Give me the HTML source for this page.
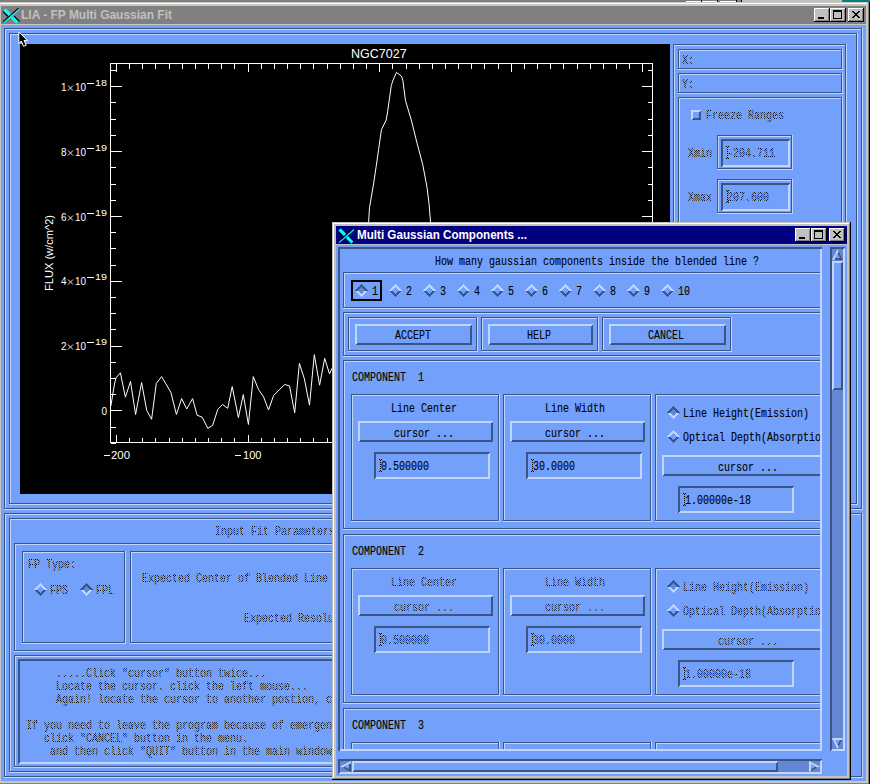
<!DOCTYPE html>
<html><head><meta charset="utf-8"><style>
html,body{margin:0;padding:0;background:#73a0fa;width:870px;height:784px;overflow:hidden}
svg{display:block}
</style></head><body>
<svg width="870" height="784" viewBox="0 0 870 784">
<defs><pattern id="st" width="2" height="2" patternUnits="userSpaceOnUse"><rect x="0" y="0" width="1" height="1" fill="#000"/><rect x="1" y="1" width="1" height="1" fill="#000"/></pattern></defs>
<g shape-rendering="crispEdges"><rect x="0" y="0" width="870" height="784" fill="#73a0fa"/><rect x="0" y="0" width="686" height="2" fill="#808080"/><rect x="686" y="0" width="56" height="2" fill="#808080"/><rect x="686" y="1" width="15" height="1" fill="#fff"/><rect x="701" y="0" width="1" height="2" fill="#000"/><rect x="702" y="1" width="15" height="1" fill="#fff"/><rect x="717" y="0" width="1" height="2" fill="#000"/><rect x="720" y="1" width="16" height="1" fill="#fff"/><rect x="736" y="0" width="1" height="2" fill="#000"/><rect x="741" y="0" width="1" height="2" fill="#000"/><rect x="742" y="0" width="100" height="2" fill="#c0c0c0"/><rect x="842" y="0" width="28" height="2" fill="#008080"/><rect x="0" y="2" width="870" height="782" fill="#c8c6c0"/><rect x="0" y="3" width="867" height="1" fill="#fff"/><rect x="868" y="2" width="1" height="782" fill="#808080"/><rect x="869" y="2" width="1" height="782" fill="#000"/><rect x="0" y="783" width="868" height="1" fill="#808080"/><rect x="1" y="6" width="865" height="18" fill="#808080"/><rect x="1" y="25" width="865" height="756" fill="#73a0fa"/></g><g transform="translate(3,8)" fill="none"><path d="M1.5 1.5L7.5 7.5" stroke="#00ffff" stroke-width="3.2"/><path d="M0 3.5L5 8.5" stroke="#000" stroke-width="1.1"/><path d="M9 9L14.5 14.5" stroke="#00ffff" stroke-width="3.2"/><path d="M11 8L16.5 13.5" stroke="#000" stroke-width="1.1"/><path d="M16 1.5L1 14.5" stroke="#00ffff" stroke-width="1.3"/><path d="M15.5 0.2L0 13.8" stroke="#000" stroke-width="1.1"/></g><text x="21" y="19" font-family="Liberation Sans" font-size="12.5" font-weight="bold" fill="#c0c0c0" textLength="151" lengthAdjust="spacingAndGlyphs">LIA - FP Multi Gaussian Fit</text><g shape-rendering="crispEdges"><rect x="848" y="8" width="16" height="14" fill="#c0c0c0"/><rect x="848" y="8" width="15" height="1" fill="#fff"/><rect x="848" y="8" width="1" height="13" fill="#fff"/><rect x="863" y="8" width="1" height="14" fill="#000"/><rect x="848" y="21" width="16" height="1" fill="#000"/><rect x="862" y="9" width="1" height="12" fill="#808080"/><rect x="849" y="20" width="14" height="1" fill="#808080"/><rect x="852" y="11" width="2" height="1" fill="#000"/><rect x="858" y="11" width="2" height="1" fill="#000"/><rect x="853" y="12" width="2" height="1" fill="#000"/><rect x="857" y="12" width="2" height="1" fill="#000"/><rect x="854" y="13" width="4" height="1" fill="#000"/><rect x="855" y="14" width="2" height="1" fill="#000"/><rect x="854" y="15" width="4" height="1" fill="#000"/><rect x="853" y="16" width="2" height="1" fill="#000"/><rect x="857" y="16" width="2" height="1" fill="#000"/><rect x="852" y="17" width="2" height="1" fill="#000"/><rect x="858" y="17" width="2" height="1" fill="#000"/><rect x="830" y="8" width="16" height="14" fill="#c0c0c0"/><rect x="830" y="8" width="15" height="1" fill="#fff"/><rect x="830" y="8" width="1" height="13" fill="#fff"/><rect x="845" y="8" width="1" height="14" fill="#000"/><rect x="830" y="21" width="16" height="1" fill="#000"/><rect x="844" y="9" width="1" height="12" fill="#808080"/><rect x="831" y="20" width="14" height="1" fill="#808080"/><rect x="833" y="10" width="9" height="2" fill="#000"/><rect x="833" y="10" width="1" height="9" fill="#000"/><rect x="841" y="10" width="1" height="9" fill="#000"/><rect x="833" y="18" width="9" height="1" fill="#000"/><rect x="814" y="8" width="16" height="14" fill="#c0c0c0"/><rect x="814" y="8" width="15" height="1" fill="#fff"/><rect x="814" y="8" width="1" height="13" fill="#fff"/><rect x="829" y="8" width="1" height="14" fill="#000"/><rect x="814" y="21" width="16" height="1" fill="#000"/><rect x="828" y="9" width="1" height="12" fill="#808080"/><rect x="815" y="20" width="14" height="1" fill="#808080"/><rect x="818" y="17" width="6" height="2" fill="#000"/><rect x="4" y="28" width="858" height="1" fill="#3d5585"/><rect x="4" y="28" width="1" height="481" fill="#3d5585"/><rect x="5" y="29" width="856" height="1" fill="#c2d6fd"/><rect x="5" y="29" width="1" height="479" fill="#c2d6fd"/><rect x="5" y="508" width="857" height="1" fill="#3d5585"/><rect x="861" y="29" width="1" height="480" fill="#3d5585"/><rect x="4" y="509" width="859" height="1" fill="#c2d6fd"/><rect x="862" y="28" width="1" height="482" fill="#c2d6fd"/><rect x="9" y="33" width="848" height="1" fill="#3d5585"/><rect x="9" y="33" width="1" height="471" fill="#3d5585"/><rect x="10" y="34" width="846" height="1" fill="#c2d6fd"/><rect x="10" y="34" width="1" height="469" fill="#c2d6fd"/><rect x="10" y="503" width="847" height="1" fill="#3d5585"/><rect x="856" y="34" width="1" height="470" fill="#3d5585"/><rect x="9" y="504" width="849" height="1" fill="#c2d6fd"/><rect x="857" y="33" width="1" height="472" fill="#c2d6fd"/><rect x="20" y="44" width="650" height="450" fill="#000"/></g><g stroke="#fff" fill="none" stroke-width="1" shape-rendering="crispEdges"><path d="M110.5 63.5H652.5V442.5H110.5Z"/><path d="M116.5 442.5V434.5M116.5 63.5V71.5M129.5 442.5V437.5M129.5 63.5V68.5M142.5 442.5V437.5M142.5 63.5V68.5M155.5 442.5V437.5M155.5 63.5V68.5M169.5 442.5V437.5M169.5 63.5V68.5M182.5 442.5V437.5M182.5 63.5V68.5M195.5 442.5V437.5M195.5 63.5V68.5M208.5 442.5V437.5M208.5 63.5V68.5M221.5 442.5V437.5M221.5 63.5V68.5M234.5 442.5V437.5M234.5 63.5V68.5M248.5 442.5V434.5M248.5 63.5V71.5M261.5 442.5V437.5M261.5 63.5V68.5M274.5 442.5V437.5M274.5 63.5V68.5M287.5 442.5V437.5M287.5 63.5V68.5M300.5 442.5V437.5M300.5 63.5V68.5M313.5 442.5V437.5M313.5 63.5V68.5M327.5 442.5V437.5M327.5 63.5V68.5M340.5 442.5V437.5M340.5 63.5V68.5M353.5 442.5V437.5M353.5 63.5V68.5M366.5 442.5V437.5M366.5 63.5V68.5M379.5 442.5V434.5M379.5 63.5V71.5M392.5 442.5V437.5M392.5 63.5V68.5M406.5 442.5V437.5M406.5 63.5V68.5M419.5 442.5V437.5M419.5 63.5V68.5M432.5 442.5V437.5M432.5 63.5V68.5M445.5 442.5V437.5M445.5 63.5V68.5M458.5 442.5V437.5M458.5 63.5V68.5M471.5 442.5V437.5M471.5 63.5V68.5M484.5 442.5V437.5M484.5 63.5V68.5M498.5 442.5V437.5M498.5 63.5V68.5M511.5 442.5V434.5M511.5 63.5V71.5M524.5 442.5V437.5M524.5 63.5V68.5M537.5 442.5V437.5M537.5 63.5V68.5M550.5 442.5V437.5M550.5 63.5V68.5M563.5 442.5V437.5M563.5 63.5V68.5M577.5 442.5V437.5M577.5 63.5V68.5M590.5 442.5V437.5M590.5 63.5V68.5M603.5 442.5V437.5M603.5 63.5V68.5M616.5 442.5V437.5M616.5 63.5V68.5M629.5 442.5V437.5M629.5 63.5V68.5M642.5 442.5V434.5M642.5 63.5V71.5M110.5 443.5H115.5M652.5 443.5H647.5M110.5 427.5H115.5M652.5 427.5H647.5M110.5 410.5H121.5M652.5 410.5H641.5M110.5 394.5H115.5M652.5 394.5H647.5M110.5 378.5H115.5M652.5 378.5H647.5M110.5 362.5H115.5M652.5 362.5H647.5M110.5 346.5H121.5M652.5 346.5H641.5M110.5 329.5H115.5M652.5 329.5H647.5M110.5 313.5H115.5M652.5 313.5H647.5M110.5 297.5H115.5M652.5 297.5H647.5M110.5 281.5H121.5M652.5 281.5H641.5M110.5 265.5H115.5M652.5 265.5H647.5M110.5 248.5H115.5M652.5 248.5H647.5M110.5 232.5H115.5M652.5 232.5H647.5M110.5 216.5H121.5M652.5 216.5H641.5M110.5 200.5H115.5M652.5 200.5H647.5M110.5 184.5H115.5M652.5 184.5H647.5M110.5 167.5H115.5M652.5 167.5H647.5M110.5 151.5H121.5M652.5 151.5H641.5M110.5 135.5H115.5M652.5 135.5H647.5M110.5 119.5H115.5M652.5 119.5H647.5M110.5 102.5H115.5M652.5 102.5H647.5M110.5 86.5H121.5M652.5 86.5H641.5M110.5 70.5H115.5M652.5 70.5H647.5"/></g><polyline fill="none" stroke="#fff" stroke-width="1" points="110.8,406.2 114.7,382.8 116.0,377.9 120.4,372.8 125.4,397.2 130.5,381.4 135.6,414.5 141.6,382.5 146.7,410.3 151.6,419.3 156.3,383.4 161.6,376.6 170.9,392.4 176.4,414.5 181.6,398.6 186.7,409.0 192.6,398.6 197.1,415.2 202.2,417.2 207.8,428.3 212.6,425.5 217.8,409.3 222.6,404.5 227.7,408.3 232.2,386.6 238.4,417.6 243.3,394.6 248.4,424.5 253.3,376.6 258.4,389.3 263.6,396.9 268.5,410.0 273.6,395.5 284.7,384.5 289.5,385.9 294.7,412.8 299.4,363.4 304.4,378.9 309.5,405.2 314.3,354.6 319.6,385.2 324.7,358.3 329.5,373.9 335.0,362.0 345.0,340.0 360.0,300.0 368.5,224.0 369.5,207.7 373.7,183.1 376.2,166.3 378.6,149.5 381.4,129.8 386.2,120.0 387.6,111.7 391.3,85.5 393.1,80.0 396.5,72.4 401.4,76.1 402.8,80.0 405.5,100.7 411.3,120.0 416.5,141.0 422.8,164.9 427.0,187.3 429.1,204.2 430.5,222.0 432.0,240.0"/><text x="351" y="58" font-family="Liberation Sans" font-size="12.5" fill="#fff"  xml:space="preserve">NGC7027</text><text x="61" y="91" font-family="Liberation Sans" font-size="10" fill="#fff">1</text><path d="M68 85.5L73 90.5M73 85.5L68 90.5" stroke="#fff" stroke-width="0.9" fill="none"/><text x="75" y="91" font-family="Liberation Sans" font-size="10" fill="#fff" textLength="11" lengthAdjust="spacingAndGlyphs">10</text><rect x="87" y="83" width="7" height="1" fill="#fff"/><text x="95" y="86" font-family="Liberation Sans" font-size="9.3" fill="#fff" textLength="12" lengthAdjust="spacingAndGlyphs">18</text><text x="61" y="156" font-family="Liberation Sans" font-size="10" fill="#fff">8</text><path d="M68 150.5L73 155.5M73 150.5L68 155.5" stroke="#fff" stroke-width="0.9" fill="none"/><text x="75" y="156" font-family="Liberation Sans" font-size="10" fill="#fff" textLength="11" lengthAdjust="spacingAndGlyphs">10</text><rect x="87" y="148" width="7" height="1" fill="#fff"/><text x="95" y="151" font-family="Liberation Sans" font-size="9.3" fill="#fff" textLength="12" lengthAdjust="spacingAndGlyphs">19</text><text x="61" y="221" font-family="Liberation Sans" font-size="10" fill="#fff">6</text><path d="M68 215.5L73 220.5M73 215.5L68 220.5" stroke="#fff" stroke-width="0.9" fill="none"/><text x="75" y="221" font-family="Liberation Sans" font-size="10" fill="#fff" textLength="11" lengthAdjust="spacingAndGlyphs">10</text><rect x="87" y="213" width="7" height="1" fill="#fff"/><text x="95" y="216" font-family="Liberation Sans" font-size="9.3" fill="#fff" textLength="12" lengthAdjust="spacingAndGlyphs">19</text><text x="61" y="285" font-family="Liberation Sans" font-size="10" fill="#fff">4</text><path d="M68 279.5L73 284.5M73 279.5L68 284.5" stroke="#fff" stroke-width="0.9" fill="none"/><text x="75" y="285" font-family="Liberation Sans" font-size="10" fill="#fff" textLength="11" lengthAdjust="spacingAndGlyphs">10</text><rect x="87" y="277" width="7" height="1" fill="#fff"/><text x="95" y="280" font-family="Liberation Sans" font-size="9.3" fill="#fff" textLength="12" lengthAdjust="spacingAndGlyphs">19</text><text x="61" y="350" font-family="Liberation Sans" font-size="10" fill="#fff">2</text><path d="M68 344.5L73 349.5M73 344.5L68 349.5" stroke="#fff" stroke-width="0.9" fill="none"/><text x="75" y="350" font-family="Liberation Sans" font-size="10" fill="#fff" textLength="11" lengthAdjust="spacingAndGlyphs">10</text><rect x="87" y="342" width="7" height="1" fill="#fff"/><text x="95" y="345" font-family="Liberation Sans" font-size="9.3" fill="#fff" textLength="12" lengthAdjust="spacingAndGlyphs">19</text><text x="101.5" y="414.5" font-family="Liberation Sans" font-size="10" fill="#fff">0</text><rect x="104" y="455" width="6" height="1" fill="#fff"/><text x="111" y="459" font-family="Liberation Sans" font-size="10.5" fill="#fff" textLength="19" lengthAdjust="spacingAndGlyphs">200</text><rect x="235" y="455" width="6" height="1" fill="#fff"/><text x="243" y="459" font-family="Liberation Sans" font-size="10.5" fill="#fff" textLength="18.5" lengthAdjust="spacingAndGlyphs">100</text><text transform="translate(53,291) rotate(-90)" font-family="Liberation Sans" font-size="10.5" fill="#fff" textLength="76" lengthAdjust="spacingAndGlyphs">FLUX (w/cm^2)</text><g shape-rendering="crispEdges"><rect x="673" y="44" width="173" height="1" fill="#3d5585"/><rect x="673" y="44" width="1" height="455" fill="#3d5585"/><rect x="674" y="45" width="171" height="1" fill="#c2d6fd"/><rect x="674" y="45" width="1" height="453" fill="#c2d6fd"/><rect x="674" y="498" width="172" height="1" fill="#3d5585"/><rect x="845" y="45" width="1" height="454" fill="#3d5585"/><rect x="673" y="499" width="174" height="1" fill="#c2d6fd"/><rect x="846" y="44" width="1" height="456" fill="#c2d6fd"/><rect x="678" y="49" width="164" height="1" fill="#3d5585"/><rect x="678" y="49" width="1" height="20" fill="#3d5585"/><rect x="679" y="50" width="162" height="1" fill="#c2d6fd"/><rect x="679" y="50" width="1" height="18" fill="#c2d6fd"/><rect x="679" y="68" width="163" height="1" fill="#3d5585"/><rect x="841" y="50" width="1" height="19" fill="#3d5585"/><rect x="678" y="69" width="165" height="1" fill="#c2d6fd"/><rect x="842" y="49" width="1" height="21" fill="#c2d6fd"/><rect x="678" y="73" width="164" height="1" fill="#3d5585"/><rect x="678" y="73" width="1" height="20" fill="#3d5585"/><rect x="679" y="74" width="162" height="1" fill="#c2d6fd"/><rect x="679" y="74" width="1" height="18" fill="#c2d6fd"/><rect x="679" y="92" width="163" height="1" fill="#3d5585"/><rect x="841" y="74" width="1" height="19" fill="#3d5585"/><rect x="678" y="93" width="165" height="1" fill="#c2d6fd"/><rect x="842" y="73" width="1" height="21" fill="#c2d6fd"/><rect x="678" y="97" width="164" height="1" fill="#3d5585"/><rect x="678" y="97" width="1" height="398" fill="#3d5585"/><rect x="679" y="98" width="162" height="1" fill="#c2d6fd"/><rect x="679" y="98" width="1" height="396" fill="#c2d6fd"/><rect x="679" y="494" width="163" height="1" fill="#3d5585"/><rect x="841" y="98" width="1" height="397" fill="#3d5585"/><rect x="678" y="495" width="165" height="1" fill="#c2d6fd"/><rect x="842" y="97" width="1" height="399" fill="#c2d6fd"/><rect x="691" y="110" width="10" height="1" fill="#c2d6fd"/><rect x="691" y="110" width="1" height="10" fill="#c2d6fd"/><rect x="691" y="111" width="9" height="1" fill="#c2d6fd"/><rect x="692" y="110" width="1" height="9" fill="#c2d6fd"/><rect x="692" y="119" width="9" height="1" fill="#3d5585"/><rect x="700" y="111" width="1" height="9" fill="#3d5585"/><rect x="693" y="118" width="8" height="1" fill="#3d5585"/><rect x="699" y="112" width="1" height="8" fill="#3d5585"/><rect x="717" y="135" width="75" height="1" fill="#3d5585"/><rect x="717" y="135" width="1" height="34" fill="#3d5585"/><rect x="718" y="136" width="73" height="1" fill="#c2d6fd"/><rect x="718" y="136" width="1" height="32" fill="#c2d6fd"/><rect x="718" y="168" width="74" height="1" fill="#3d5585"/><rect x="791" y="136" width="1" height="33" fill="#3d5585"/><rect x="717" y="169" width="76" height="1" fill="#c2d6fd"/><rect x="792" y="135" width="1" height="35" fill="#c2d6fd"/><rect x="721" y="139" width="69" height="1" fill="#3d5585"/><rect x="721" y="139" width="1" height="28" fill="#3d5585"/><rect x="721" y="140" width="68" height="1" fill="#3d5585"/><rect x="722" y="139" width="1" height="27" fill="#3d5585"/><rect x="722" y="166" width="68" height="1" fill="#c2d6fd"/><rect x="789" y="140" width="1" height="27" fill="#c2d6fd"/><rect x="723" y="165" width="67" height="1" fill="#c2d6fd"/><rect x="788" y="141" width="1" height="26" fill="#c2d6fd"/><rect x="717" y="179" width="75" height="1" fill="#3d5585"/><rect x="717" y="179" width="1" height="34" fill="#3d5585"/><rect x="718" y="180" width="73" height="1" fill="#c2d6fd"/><rect x="718" y="180" width="1" height="32" fill="#c2d6fd"/><rect x="718" y="212" width="74" height="1" fill="#3d5585"/><rect x="791" y="180" width="1" height="33" fill="#3d5585"/><rect x="717" y="213" width="76" height="1" fill="#c2d6fd"/><rect x="792" y="179" width="1" height="35" fill="#c2d6fd"/><rect x="721" y="183" width="69" height="1" fill="#3d5585"/><rect x="721" y="183" width="1" height="28" fill="#3d5585"/><rect x="721" y="184" width="68" height="1" fill="#3d5585"/><rect x="722" y="183" width="1" height="27" fill="#3d5585"/><rect x="722" y="210" width="68" height="1" fill="#c2d6fd"/><rect x="789" y="184" width="1" height="27" fill="#c2d6fd"/><rect x="723" y="209" width="67" height="1" fill="#c2d6fd"/><rect x="788" y="185" width="1" height="26" fill="#c2d6fd"/></g><text x="682" y="64" font-family="Liberation Mono" font-size="13.5" textLength="12" lengthAdjust="spacingAndGlyphs" fill="url(#st)" stroke="url(#st)" stroke-width="0.15" xml:space="preserve">X:</text><text x="682" y="88" font-family="Liberation Mono" font-size="13.5" textLength="12" lengthAdjust="spacingAndGlyphs" fill="url(#st)" stroke="url(#st)" stroke-width="0.15" xml:space="preserve">Y:</text><text x="706" y="119" font-family="Liberation Mono" font-size="13.5" textLength="78" lengthAdjust="spacingAndGlyphs" fill="url(#st)" stroke="url(#st)" stroke-width="0.15" xml:space="preserve">Freeze Ranges</text><text x="688" y="157" font-family="Liberation Mono" font-size="13.5" textLength="24" lengthAdjust="spacingAndGlyphs" fill="url(#st)" stroke="url(#st)" stroke-width="0.15" xml:space="preserve">Xmin</text><text x="688" y="201" font-family="Liberation Mono" font-size="13.5" textLength="24" lengthAdjust="spacingAndGlyphs" fill="url(#st)" stroke="url(#st)" stroke-width="0.15" xml:space="preserve">Xmax</text><text x="727" y="157" font-family="Liberation Mono" font-size="13.5" textLength="48" lengthAdjust="spacingAndGlyphs" fill="url(#st)" stroke="url(#st)" stroke-width="0.15" xml:space="preserve">-204.711</text><g fill="#000"><rect x="727" y="147" width="1" height="1"/><rect x="727" y="149" width="1" height="1"/><rect x="727" y="151" width="1" height="1"/><rect x="727" y="153" width="1" height="1"/><rect x="727" y="155" width="1" height="1"/><rect x="727" y="157" width="1" height="1"/><rect x="726" y="146" width="1" height="1"/><rect x="728" y="146" width="1" height="1"/><rect x="726" y="158" width="1" height="1"/><rect x="728" y="158" width="1" height="1"/></g><text x="727" y="201" font-family="Liberation Mono" font-size="13.5" textLength="42" lengthAdjust="spacingAndGlyphs" fill="url(#st)" stroke="url(#st)" stroke-width="0.15" xml:space="preserve">207.600</text><g fill="#000"><rect x="727" y="191" width="1" height="1"/><rect x="727" y="193" width="1" height="1"/><rect x="727" y="195" width="1" height="1"/><rect x="727" y="197" width="1" height="1"/><rect x="727" y="199" width="1" height="1"/><rect x="727" y="201" width="1" height="1"/><rect x="726" y="190" width="1" height="1"/><rect x="728" y="190" width="1" height="1"/><rect x="726" y="202" width="1" height="1"/><rect x="728" y="202" width="1" height="1"/></g><g shape-rendering="crispEdges"><rect x="4" y="513" width="858" height="1" fill="#3d5585"/><rect x="4" y="513" width="1" height="264" fill="#3d5585"/><rect x="5" y="514" width="856" height="1" fill="#c2d6fd"/><rect x="5" y="514" width="1" height="262" fill="#c2d6fd"/><rect x="5" y="776" width="857" height="1" fill="#3d5585"/><rect x="861" y="514" width="1" height="263" fill="#3d5585"/><rect x="4" y="777" width="859" height="1" fill="#c2d6fd"/><rect x="862" y="513" width="1" height="265" fill="#c2d6fd"/><rect x="9" y="518" width="836" height="1" fill="#3d5585"/><rect x="9" y="518" width="1" height="254" fill="#3d5585"/><rect x="10" y="519" width="834" height="1" fill="#c2d6fd"/><rect x="10" y="519" width="1" height="252" fill="#c2d6fd"/><rect x="10" y="771" width="835" height="1" fill="#3d5585"/><rect x="844" y="519" width="1" height="253" fill="#3d5585"/><rect x="9" y="772" width="837" height="1" fill="#c2d6fd"/><rect x="845" y="518" width="1" height="255" fill="#c2d6fd"/><rect x="14" y="543" width="826" height="1" fill="#3d5585"/><rect x="14" y="543" width="1" height="108" fill="#3d5585"/><rect x="15" y="544" width="824" height="1" fill="#c2d6fd"/><rect x="15" y="544" width="1" height="106" fill="#c2d6fd"/><rect x="15" y="650" width="825" height="1" fill="#3d5585"/><rect x="839" y="544" width="1" height="107" fill="#3d5585"/><rect x="14" y="651" width="827" height="1" fill="#c2d6fd"/><rect x="840" y="543" width="1" height="109" fill="#c2d6fd"/><rect x="22" y="551" width="103" height="1" fill="#3d5585"/><rect x="22" y="551" width="1" height="92" fill="#3d5585"/><rect x="23" y="552" width="101" height="1" fill="#c2d6fd"/><rect x="23" y="552" width="1" height="90" fill="#c2d6fd"/><rect x="23" y="642" width="102" height="1" fill="#3d5585"/><rect x="124" y="552" width="1" height="91" fill="#3d5585"/><rect x="22" y="643" width="104" height="1" fill="#c2d6fd"/><rect x="125" y="551" width="1" height="93" fill="#c2d6fd"/><rect x="130" y="551" width="702" height="1" fill="#3d5585"/><rect x="130" y="551" width="1" height="92" fill="#3d5585"/><rect x="131" y="552" width="700" height="1" fill="#c2d6fd"/><rect x="131" y="552" width="1" height="90" fill="#c2d6fd"/><rect x="131" y="642" width="701" height="1" fill="#3d5585"/><rect x="831" y="552" width="1" height="91" fill="#3d5585"/><rect x="130" y="643" width="703" height="1" fill="#c2d6fd"/><rect x="832" y="551" width="1" height="93" fill="#c2d6fd"/><rect x="14" y="655" width="826" height="1" fill="#3d5585"/><rect x="14" y="655" width="1" height="112" fill="#3d5585"/><rect x="15" y="656" width="824" height="1" fill="#c2d6fd"/><rect x="15" y="656" width="1" height="110" fill="#c2d6fd"/><rect x="15" y="766" width="825" height="1" fill="#3d5585"/><rect x="839" y="656" width="1" height="111" fill="#3d5585"/><rect x="14" y="767" width="827" height="1" fill="#c2d6fd"/><rect x="840" y="655" width="1" height="113" fill="#c2d6fd"/><rect x="18" y="659" width="819" height="1" fill="#3d5585"/><rect x="18" y="659" width="1" height="105" fill="#3d5585"/><rect x="18" y="660" width="818" height="1" fill="#3d5585"/><rect x="19" y="659" width="1" height="104" fill="#3d5585"/><rect x="19" y="763" width="818" height="1" fill="#c2d6fd"/><rect x="836" y="660" width="1" height="104" fill="#c2d6fd"/><rect x="20" y="762" width="817" height="1" fill="#c2d6fd"/><rect x="835" y="661" width="1" height="103" fill="#c2d6fd"/></g><text x="215" y="535" font-family="Liberation Mono" font-size="13.5" textLength="120" lengthAdjust="spacingAndGlyphs" fill="url(#st)" stroke="url(#st)" stroke-width="0.15" xml:space="preserve">Input Fit Parameters</text><text x="28" y="568" font-family="Liberation Mono" font-size="13.5" textLength="48" lengthAdjust="spacingAndGlyphs" fill="url(#st)" stroke="url(#st)" stroke-width="0.15" xml:space="preserve">FP Type:</text><g shape-rendering="crispEdges"><path d="M34.0 589.5L40.5 583.0L47.0 589.5Z" fill="#c2d6fd"/><path d="M34.0 589.5L40.5 596.0L47.0 589.5Z" fill="#3d5585"/><path d="M37.0 589.5L40.5 586.0L44.0 589.5L40.5 593.0Z" fill="#73a0fa"/></g><text x="50" y="594" font-family="Liberation Mono" font-size="13.5" textLength="18" lengthAdjust="spacingAndGlyphs" fill="url(#st)" stroke="url(#st)" stroke-width="0.15" xml:space="preserve">FPS</text><g shape-rendering="crispEdges"><path d="M80.0 589.5L86.5 583.0L93.0 589.5Z" fill="#3d5585"/><path d="M80.0 589.5L86.5 596.0L93.0 589.5Z" fill="#c2d6fd"/><path d="M83.0 589.5L86.5 586.0L90.0 589.5L86.5 593.0Z" fill="#6288d5"/></g><text x="96" y="594" font-family="Liberation Mono" font-size="13.5" textLength="18" lengthAdjust="spacingAndGlyphs" fill="url(#st)" stroke="url(#st)" stroke-width="0.15" xml:space="preserve">FPL</text><text x="142" y="582" font-family="Liberation Mono" font-size="13.5" textLength="186" lengthAdjust="spacingAndGlyphs" fill="url(#st)" stroke="url(#st)" stroke-width="0.15" xml:space="preserve">Expected Center of Blended Line</text><text x="244" y="622" font-family="Liberation Mono" font-size="13.5" textLength="114" lengthAdjust="spacingAndGlyphs" fill="url(#st)" stroke="url(#st)" stroke-width="0.15" xml:space="preserve">Expected Resolution</text><text x="26" y="677" font-family="Liberation Mono" font-size="13.5" textLength="240" lengthAdjust="spacingAndGlyphs" fill="url(#st)" stroke="url(#st)" stroke-width="0.15" xml:space="preserve">     .....Click &quot;cursor&quot; button twice...</text><text x="26" y="690" font-family="Liberation Mono" font-size="13.5" textLength="282" lengthAdjust="spacingAndGlyphs" fill="url(#st)" stroke="url(#st)" stroke-width="0.15" xml:space="preserve">     Locate the cursor. click the left mouse...</text><text x="26" y="703" font-family="Liberation Mono" font-size="13.5" textLength="330" lengthAdjust="spacingAndGlyphs" fill="url(#st)" stroke="url(#st)" stroke-width="0.15" xml:space="preserve">     Again! locate the cursor to another postion, click</text><text x="26" y="729" font-family="Liberation Mono" font-size="13.5" textLength="318" lengthAdjust="spacingAndGlyphs" fill="url(#st)" stroke="url(#st)" stroke-width="0.15" xml:space="preserve">If you need to leave the program because of emergency</text><text x="26" y="742" font-family="Liberation Mono" font-size="13.5" textLength="222" lengthAdjust="spacingAndGlyphs" fill="url(#st)" stroke="url(#st)" stroke-width="0.15" xml:space="preserve">   click &quot;CANCEL&quot; button in the menu.</text><text x="26" y="755" font-family="Liberation Mono" font-size="13.5" textLength="324" lengthAdjust="spacingAndGlyphs" fill="url(#st)" stroke="url(#st)" stroke-width="0.15" xml:space="preserve">    and then click &quot;QUIT&quot; button in the main window...</text><g shape-rendering="crispEdges"><rect x="332" y="222" width="519" height="558" fill="#c3c2be"/><rect x="332" y="222" width="518" height="1" fill="#c3c2be"/><rect x="333" y="223" width="516" height="1" fill="#ffffff"/><rect x="333" y="223" width="1" height="555" fill="#ffffff"/><rect x="849" y="223" width="1" height="556" fill="#808080"/><rect x="333" y="778" width="517" height="1" fill="#808080"/><rect x="850" y="222" width="1" height="558" fill="#000"/><rect x="332" y="779" width="519" height="1" fill="#000"/><rect x="336" y="226" width="511" height="18" fill="#000080"/><rect x="336" y="245" width="511" height="531" fill="#73a0fa"/><rect x="829" y="228" width="16" height="14" fill="#c0c0c0"/><rect x="829" y="228" width="15" height="1" fill="#fff"/><rect x="829" y="228" width="1" height="13" fill="#fff"/><rect x="844" y="228" width="1" height="14" fill="#000"/><rect x="829" y="241" width="16" height="1" fill="#000"/><rect x="843" y="229" width="1" height="12" fill="#808080"/><rect x="830" y="240" width="14" height="1" fill="#808080"/><rect x="833" y="231" width="2" height="1" fill="#000"/><rect x="839" y="231" width="2" height="1" fill="#000"/><rect x="834" y="232" width="2" height="1" fill="#000"/><rect x="838" y="232" width="2" height="1" fill="#000"/><rect x="835" y="233" width="4" height="1" fill="#000"/><rect x="836" y="234" width="2" height="1" fill="#000"/><rect x="835" y="235" width="4" height="1" fill="#000"/><rect x="834" y="236" width="2" height="1" fill="#000"/><rect x="838" y="236" width="2" height="1" fill="#000"/><rect x="833" y="237" width="2" height="1" fill="#000"/><rect x="839" y="237" width="2" height="1" fill="#000"/><rect x="811" y="228" width="16" height="14" fill="#c0c0c0"/><rect x="811" y="228" width="15" height="1" fill="#fff"/><rect x="811" y="228" width="1" height="13" fill="#fff"/><rect x="826" y="228" width="1" height="14" fill="#000"/><rect x="811" y="241" width="16" height="1" fill="#000"/><rect x="825" y="229" width="1" height="12" fill="#808080"/><rect x="812" y="240" width="14" height="1" fill="#808080"/><rect x="814" y="230" width="9" height="2" fill="#000"/><rect x="814" y="230" width="1" height="9" fill="#000"/><rect x="822" y="230" width="1" height="9" fill="#000"/><rect x="814" y="238" width="9" height="1" fill="#000"/><rect x="795" y="228" width="16" height="14" fill="#c0c0c0"/><rect x="795" y="228" width="15" height="1" fill="#fff"/><rect x="795" y="228" width="1" height="13" fill="#fff"/><rect x="810" y="228" width="1" height="14" fill="#000"/><rect x="795" y="241" width="16" height="1" fill="#000"/><rect x="809" y="229" width="1" height="12" fill="#808080"/><rect x="796" y="240" width="14" height="1" fill="#808080"/><rect x="799" y="237" width="6" height="2" fill="#000"/></g><g transform="translate(338,228)" fill="none"><path d="M1.5 1.5L7.5 7.5" stroke="#00ffff" stroke-width="3.2"/><path d="M0 3.5L5 8.5" stroke="#000" stroke-width="1.1"/><path d="M9 9L14.5 14.5" stroke="#00ffff" stroke-width="3.2"/><path d="M11 8L16.5 13.5" stroke="#000" stroke-width="1.1"/><path d="M16 1.5L1 14.5" stroke="#00ffff" stroke-width="1.3"/><path d="M15.5 0.2L0 13.8" stroke="#000" stroke-width="1.1"/></g><text x="357" y="239" font-family="Liberation Sans" font-size="12.5" font-weight="bold" fill="#fff" textLength="170" lengthAdjust="spacingAndGlyphs">Multi Gaussian Components ...</text><svg x="340" y="249" width="480" height="500" overflow="hidden"><g transform="translate(-340,-249)"><g shape-rendering="crispEdges"></g><text x="435" y="265" font-family="Liberation Mono" font-size="13.5" textLength="324" lengthAdjust="spacingAndGlyphs" fill="#000" stroke="#000" stroke-width="0.12" xml:space="preserve">How many gaussian components inside the blended line ?</text><g shape-rendering="crispEdges"><rect x="343" y="272" width="557" height="1" fill="#3d5585"/><rect x="343" y="272" width="1" height="36" fill="#3d5585"/><rect x="344" y="273" width="555" height="1" fill="#c2d6fd"/><rect x="344" y="273" width="1" height="34" fill="#c2d6fd"/><rect x="344" y="307" width="556" height="1" fill="#3d5585"/><rect x="899" y="273" width="1" height="35" fill="#3d5585"/><rect x="343" y="308" width="558" height="1" fill="#c2d6fd"/><rect x="900" y="272" width="1" height="37" fill="#c2d6fd"/><rect x="351" y="280" width="31" height="2" fill="#000"/><rect x="351" y="299" width="31" height="2" fill="#000"/><rect x="351" y="280" width="2" height="21" fill="#000"/><rect x="380" y="280" width="2" height="21" fill="#000"/><g shape-rendering="crispEdges"><path d="M355.0 290.5L361.5 284.0L368.0 290.5Z" fill="#3d5585"/><path d="M355.0 290.5L361.5 297.0L368.0 290.5Z" fill="#c2d6fd"/><path d="M358.0 290.5L361.5 287.0L365.0 290.5L361.5 294.0Z" fill="#6288d5"/></g><g shape-rendering="crispEdges"><path d="M389.0 290.5L395.5 284.0L402.0 290.5Z" fill="#c2d6fd"/><path d="M389.0 290.5L395.5 297.0L402.0 290.5Z" fill="#3d5585"/><path d="M392.0 290.5L395.5 287.0L399.0 290.5L395.5 294.0Z" fill="#73a0fa"/></g><g shape-rendering="crispEdges"><path d="M423.0 290.5L429.5 284.0L436.0 290.5Z" fill="#c2d6fd"/><path d="M423.0 290.5L429.5 297.0L436.0 290.5Z" fill="#3d5585"/><path d="M426.0 290.5L429.5 287.0L433.0 290.5L429.5 294.0Z" fill="#73a0fa"/></g><g shape-rendering="crispEdges"><path d="M457.0 290.5L463.5 284.0L470.0 290.5Z" fill="#c2d6fd"/><path d="M457.0 290.5L463.5 297.0L470.0 290.5Z" fill="#3d5585"/><path d="M460.0 290.5L463.5 287.0L467.0 290.5L463.5 294.0Z" fill="#73a0fa"/></g><g shape-rendering="crispEdges"><path d="M491.0 290.5L497.5 284.0L504.0 290.5Z" fill="#c2d6fd"/><path d="M491.0 290.5L497.5 297.0L504.0 290.5Z" fill="#3d5585"/><path d="M494.0 290.5L497.5 287.0L501.0 290.5L497.5 294.0Z" fill="#73a0fa"/></g><g shape-rendering="crispEdges"><path d="M525.0 290.5L531.5 284.0L538.0 290.5Z" fill="#c2d6fd"/><path d="M525.0 290.5L531.5 297.0L538.0 290.5Z" fill="#3d5585"/><path d="M528.0 290.5L531.5 287.0L535.0 290.5L531.5 294.0Z" fill="#73a0fa"/></g><g shape-rendering="crispEdges"><path d="M559.0 290.5L565.5 284.0L572.0 290.5Z" fill="#c2d6fd"/><path d="M559.0 290.5L565.5 297.0L572.0 290.5Z" fill="#3d5585"/><path d="M562.0 290.5L565.5 287.0L569.0 290.5L565.5 294.0Z" fill="#73a0fa"/></g><g shape-rendering="crispEdges"><path d="M593.0 290.5L599.5 284.0L606.0 290.5Z" fill="#c2d6fd"/><path d="M593.0 290.5L599.5 297.0L606.0 290.5Z" fill="#3d5585"/><path d="M596.0 290.5L599.5 287.0L603.0 290.5L599.5 294.0Z" fill="#73a0fa"/></g><g shape-rendering="crispEdges"><path d="M627.0 290.5L633.5 284.0L640.0 290.5Z" fill="#c2d6fd"/><path d="M627.0 290.5L633.5 297.0L640.0 290.5Z" fill="#3d5585"/><path d="M630.0 290.5L633.5 287.0L637.0 290.5L633.5 294.0Z" fill="#73a0fa"/></g><g shape-rendering="crispEdges"><path d="M661.0 290.5L667.5 284.0L674.0 290.5Z" fill="#c2d6fd"/><path d="M661.0 290.5L667.5 297.0L674.0 290.5Z" fill="#3d5585"/><path d="M664.0 290.5L667.5 287.0L671.0 290.5L667.5 294.0Z" fill="#73a0fa"/></g></g><text x="372" y="295" font-family="Liberation Mono" font-size="13.5" textLength="6" lengthAdjust="spacingAndGlyphs" fill="#000" stroke="#000" stroke-width="0.12" xml:space="preserve">1</text><text x="406" y="295" font-family="Liberation Mono" font-size="13.5" textLength="6" lengthAdjust="spacingAndGlyphs" fill="#000" stroke="#000" stroke-width="0.12" xml:space="preserve">2</text><text x="440" y="295" font-family="Liberation Mono" font-size="13.5" textLength="6" lengthAdjust="spacingAndGlyphs" fill="#000" stroke="#000" stroke-width="0.12" xml:space="preserve">3</text><text x="474" y="295" font-family="Liberation Mono" font-size="13.5" textLength="6" lengthAdjust="spacingAndGlyphs" fill="#000" stroke="#000" stroke-width="0.12" xml:space="preserve">4</text><text x="508" y="295" font-family="Liberation Mono" font-size="13.5" textLength="6" lengthAdjust="spacingAndGlyphs" fill="#000" stroke="#000" stroke-width="0.12" xml:space="preserve">5</text><text x="542" y="295" font-family="Liberation Mono" font-size="13.5" textLength="6" lengthAdjust="spacingAndGlyphs" fill="#000" stroke="#000" stroke-width="0.12" xml:space="preserve">6</text><text x="576" y="295" font-family="Liberation Mono" font-size="13.5" textLength="6" lengthAdjust="spacingAndGlyphs" fill="#000" stroke="#000" stroke-width="0.12" xml:space="preserve">7</text><text x="610" y="295" font-family="Liberation Mono" font-size="13.5" textLength="6" lengthAdjust="spacingAndGlyphs" fill="#000" stroke="#000" stroke-width="0.12" xml:space="preserve">8</text><text x="644" y="295" font-family="Liberation Mono" font-size="13.5" textLength="6" lengthAdjust="spacingAndGlyphs" fill="#000" stroke="#000" stroke-width="0.12" xml:space="preserve">9</text><text x="678" y="295" font-family="Liberation Mono" font-size="13.5" textLength="12" lengthAdjust="spacingAndGlyphs" fill="#000" stroke="#000" stroke-width="0.12" xml:space="preserve">10</text><g shape-rendering="crispEdges"><rect x="343" y="312" width="557" height="1" fill="#3d5585"/><rect x="343" y="312" width="1" height="44" fill="#3d5585"/><rect x="344" y="313" width="555" height="1" fill="#c2d6fd"/><rect x="344" y="313" width="1" height="42" fill="#c2d6fd"/><rect x="344" y="355" width="556" height="1" fill="#3d5585"/><rect x="899" y="313" width="1" height="43" fill="#3d5585"/><rect x="343" y="356" width="558" height="1" fill="#c2d6fd"/><rect x="900" y="312" width="1" height="45" fill="#c2d6fd"/><rect x="348" y="317" width="129" height="1" fill="#3d5585"/><rect x="348" y="317" width="1" height="34" fill="#3d5585"/><rect x="349" y="318" width="127" height="1" fill="#c2d6fd"/><rect x="349" y="318" width="1" height="32" fill="#c2d6fd"/><rect x="349" y="350" width="128" height="1" fill="#3d5585"/><rect x="476" y="318" width="1" height="33" fill="#3d5585"/><rect x="348" y="351" width="130" height="1" fill="#c2d6fd"/><rect x="477" y="317" width="1" height="35" fill="#c2d6fd"/><rect x="355" y="324" width="117" height="1" fill="#c2d6fd"/><rect x="355" y="324" width="1" height="21" fill="#c2d6fd"/><rect x="355" y="325" width="116" height="1" fill="#c2d6fd"/><rect x="356" y="324" width="1" height="20" fill="#c2d6fd"/><rect x="356" y="344" width="116" height="1" fill="#3d5585"/><rect x="471" y="325" width="1" height="20" fill="#3d5585"/><rect x="357" y="343" width="115" height="1" fill="#3d5585"/><rect x="470" y="326" width="1" height="19" fill="#3d5585"/><rect x="481" y="317" width="117" height="1" fill="#3d5585"/><rect x="481" y="317" width="1" height="34" fill="#3d5585"/><rect x="482" y="318" width="115" height="1" fill="#c2d6fd"/><rect x="482" y="318" width="1" height="32" fill="#c2d6fd"/><rect x="482" y="350" width="116" height="1" fill="#3d5585"/><rect x="597" y="318" width="1" height="33" fill="#3d5585"/><rect x="481" y="351" width="118" height="1" fill="#c2d6fd"/><rect x="598" y="317" width="1" height="35" fill="#c2d6fd"/><rect x="488" y="324" width="105" height="1" fill="#c2d6fd"/><rect x="488" y="324" width="1" height="21" fill="#c2d6fd"/><rect x="488" y="325" width="104" height="1" fill="#c2d6fd"/><rect x="489" y="324" width="1" height="20" fill="#c2d6fd"/><rect x="489" y="344" width="104" height="1" fill="#3d5585"/><rect x="592" y="325" width="1" height="20" fill="#3d5585"/><rect x="490" y="343" width="103" height="1" fill="#3d5585"/><rect x="591" y="326" width="1" height="19" fill="#3d5585"/><rect x="602" y="317" width="129" height="1" fill="#3d5585"/><rect x="602" y="317" width="1" height="34" fill="#3d5585"/><rect x="603" y="318" width="127" height="1" fill="#c2d6fd"/><rect x="603" y="318" width="1" height="32" fill="#c2d6fd"/><rect x="603" y="350" width="128" height="1" fill="#3d5585"/><rect x="730" y="318" width="1" height="33" fill="#3d5585"/><rect x="602" y="351" width="130" height="1" fill="#c2d6fd"/><rect x="731" y="317" width="1" height="35" fill="#c2d6fd"/><rect x="609" y="324" width="117" height="1" fill="#c2d6fd"/><rect x="609" y="324" width="1" height="21" fill="#c2d6fd"/><rect x="609" y="325" width="116" height="1" fill="#c2d6fd"/><rect x="610" y="324" width="1" height="20" fill="#c2d6fd"/><rect x="610" y="344" width="116" height="1" fill="#3d5585"/><rect x="725" y="325" width="1" height="20" fill="#3d5585"/><rect x="611" y="343" width="115" height="1" fill="#3d5585"/><rect x="724" y="326" width="1" height="19" fill="#3d5585"/></g><text x="395" y="339" font-family="Liberation Mono" font-size="13.5" textLength="36" lengthAdjust="spacingAndGlyphs" fill="#000" stroke="#000" stroke-width="0.12" xml:space="preserve">ACCEPT</text><text x="527" y="339" font-family="Liberation Mono" font-size="13.5" textLength="24" lengthAdjust="spacingAndGlyphs" fill="#000" stroke="#000" stroke-width="0.12" xml:space="preserve">HELP</text><text x="648" y="339" font-family="Liberation Mono" font-size="13.5" textLength="36" lengthAdjust="spacingAndGlyphs" fill="#000" stroke="#000" stroke-width="0.12" xml:space="preserve">CANCEL</text><g shape-rendering="crispEdges"><rect x="343" y="360" width="557" height="1" fill="#3d5585"/><rect x="343" y="360" width="1" height="169" fill="#3d5585"/><rect x="344" y="361" width="555" height="1" fill="#c2d6fd"/><rect x="344" y="361" width="1" height="167" fill="#c2d6fd"/><rect x="344" y="528" width="556" height="1" fill="#3d5585"/><rect x="899" y="361" width="1" height="168" fill="#3d5585"/><rect x="343" y="529" width="558" height="1" fill="#c2d6fd"/><rect x="900" y="360" width="1" height="170" fill="#c2d6fd"/><rect x="351" y="394" width="148" height="1" fill="#3d5585"/><rect x="351" y="394" width="1" height="127" fill="#3d5585"/><rect x="352" y="395" width="146" height="1" fill="#c2d6fd"/><rect x="352" y="395" width="1" height="125" fill="#c2d6fd"/><rect x="352" y="520" width="147" height="1" fill="#3d5585"/><rect x="498" y="395" width="1" height="126" fill="#3d5585"/><rect x="351" y="521" width="149" height="1" fill="#c2d6fd"/><rect x="499" y="394" width="1" height="128" fill="#c2d6fd"/><rect x="503" y="394" width="148" height="1" fill="#3d5585"/><rect x="503" y="394" width="1" height="127" fill="#3d5585"/><rect x="504" y="395" width="146" height="1" fill="#c2d6fd"/><rect x="504" y="395" width="1" height="125" fill="#c2d6fd"/><rect x="504" y="520" width="147" height="1" fill="#3d5585"/><rect x="650" y="395" width="1" height="126" fill="#3d5585"/><rect x="503" y="521" width="149" height="1" fill="#c2d6fd"/><rect x="651" y="394" width="1" height="128" fill="#c2d6fd"/><rect x="655" y="394" width="190" height="1" fill="#3d5585"/><rect x="655" y="394" width="1" height="127" fill="#3d5585"/><rect x="656" y="395" width="188" height="1" fill="#c2d6fd"/><rect x="656" y="395" width="1" height="125" fill="#c2d6fd"/><rect x="656" y="520" width="189" height="1" fill="#3d5585"/><rect x="844" y="395" width="1" height="126" fill="#3d5585"/><rect x="655" y="521" width="191" height="1" fill="#c2d6fd"/><rect x="845" y="394" width="1" height="128" fill="#c2d6fd"/><rect x="358" y="421" width="135" height="1" fill="#c2d6fd"/><rect x="358" y="421" width="1" height="21" fill="#c2d6fd"/><rect x="358" y="422" width="134" height="1" fill="#c2d6fd"/><rect x="359" y="421" width="1" height="20" fill="#c2d6fd"/><rect x="359" y="441" width="134" height="1" fill="#3d5585"/><rect x="492" y="422" width="1" height="20" fill="#3d5585"/><rect x="360" y="440" width="133" height="1" fill="#3d5585"/><rect x="491" y="423" width="1" height="19" fill="#3d5585"/><rect x="510" y="421" width="135" height="1" fill="#c2d6fd"/><rect x="510" y="421" width="1" height="21" fill="#c2d6fd"/><rect x="510" y="422" width="134" height="1" fill="#c2d6fd"/><rect x="511" y="421" width="1" height="20" fill="#c2d6fd"/><rect x="511" y="441" width="134" height="1" fill="#3d5585"/><rect x="644" y="422" width="1" height="20" fill="#3d5585"/><rect x="512" y="440" width="133" height="1" fill="#3d5585"/><rect x="643" y="423" width="1" height="19" fill="#3d5585"/><rect x="662" y="455" width="177" height="1" fill="#c2d6fd"/><rect x="662" y="455" width="1" height="21" fill="#c2d6fd"/><rect x="662" y="456" width="176" height="1" fill="#c2d6fd"/><rect x="663" y="455" width="1" height="20" fill="#c2d6fd"/><rect x="663" y="475" width="176" height="1" fill="#3d5585"/><rect x="838" y="456" width="1" height="20" fill="#3d5585"/><rect x="664" y="474" width="175" height="1" fill="#3d5585"/><rect x="837" y="457" width="1" height="19" fill="#3d5585"/><rect x="374" y="452" width="116" height="1" fill="#3d5585"/><rect x="374" y="452" width="1" height="27" fill="#3d5585"/><rect x="374" y="453" width="115" height="1" fill="#3d5585"/><rect x="375" y="452" width="1" height="26" fill="#3d5585"/><rect x="375" y="478" width="115" height="1" fill="#c2d6fd"/><rect x="489" y="453" width="1" height="26" fill="#c2d6fd"/><rect x="376" y="477" width="114" height="1" fill="#c2d6fd"/><rect x="488" y="454" width="1" height="25" fill="#c2d6fd"/><rect x="526" y="452" width="116" height="1" fill="#3d5585"/><rect x="526" y="452" width="1" height="27" fill="#3d5585"/><rect x="526" y="453" width="115" height="1" fill="#3d5585"/><rect x="527" y="452" width="1" height="26" fill="#3d5585"/><rect x="527" y="478" width="115" height="1" fill="#c2d6fd"/><rect x="641" y="453" width="1" height="26" fill="#c2d6fd"/><rect x="528" y="477" width="114" height="1" fill="#c2d6fd"/><rect x="640" y="454" width="1" height="25" fill="#c2d6fd"/><rect x="678" y="486" width="116" height="1" fill="#3d5585"/><rect x="678" y="486" width="1" height="27" fill="#3d5585"/><rect x="678" y="487" width="115" height="1" fill="#3d5585"/><rect x="679" y="486" width="1" height="26" fill="#3d5585"/><rect x="679" y="512" width="115" height="1" fill="#c2d6fd"/><rect x="793" y="487" width="1" height="26" fill="#c2d6fd"/><rect x="680" y="511" width="114" height="1" fill="#c2d6fd"/><rect x="792" y="488" width="1" height="25" fill="#c2d6fd"/><g shape-rendering="crispEdges"><path d="M667.0 412.5L673.5 406.0L680.0 412.5Z" fill="#3d5585"/><path d="M667.0 412.5L673.5 419.0L680.0 412.5Z" fill="#c2d6fd"/><path d="M670.0 412.5L673.5 409.0L677.0 412.5L673.5 416.0Z" fill="#6288d5"/></g><g shape-rendering="crispEdges"><path d="M667.0 436.5L673.5 430.0L680.0 436.5Z" fill="#c2d6fd"/><path d="M667.0 436.5L673.5 443.0L680.0 436.5Z" fill="#3d5585"/><path d="M670.0 436.5L673.5 433.0L677.0 436.5L673.5 440.0Z" fill="#73a0fa"/></g></g><text x="352" y="381" font-family="Liberation Mono" font-size="13.5" textLength="72" lengthAdjust="spacingAndGlyphs" fill="#000" stroke="#000" stroke-width="0.12" xml:space="preserve">COMPONENT  1</text><text x="391" y="412" font-family="Liberation Mono" font-size="13.5" textLength="66" lengthAdjust="spacingAndGlyphs" fill="#000" stroke="#000" stroke-width="0.12" xml:space="preserve">Line Center</text><text x="545" y="412" font-family="Liberation Mono" font-size="13.5" textLength="60" lengthAdjust="spacingAndGlyphs" fill="#000" stroke="#000" stroke-width="0.12" xml:space="preserve">Line Width</text><text x="394" y="437" font-family="Liberation Mono" font-size="13.5" textLength="60" lengthAdjust="spacingAndGlyphs" fill="#000" stroke="#000" stroke-width="0.12" xml:space="preserve">cursor ...</text><text x="545" y="437" font-family="Liberation Mono" font-size="13.5" textLength="60" lengthAdjust="spacingAndGlyphs" fill="#000" stroke="#000" stroke-width="0.12" xml:space="preserve">cursor ...</text><text x="683" y="417" font-family="Liberation Mono" font-size="13.5" textLength="126" lengthAdjust="spacingAndGlyphs" fill="#000" stroke="#000" stroke-width="0.12" xml:space="preserve">Line Height(Emission)</text><text x="683" y="441" font-family="Liberation Mono" font-size="13.5" textLength="150" lengthAdjust="spacingAndGlyphs" fill="#000" stroke="#000" stroke-width="0.12" xml:space="preserve">Optical Depth(Absorption)</text><text x="718" y="471" font-family="Liberation Mono" font-size="13.5" textLength="60" lengthAdjust="spacingAndGlyphs" fill="#000" stroke="#000" stroke-width="0.12" xml:space="preserve">cursor ...</text><text x="381" y="470" font-family="Liberation Mono" font-size="13.5" textLength="48" lengthAdjust="spacingAndGlyphs" fill="#000" stroke="#000" stroke-width="0.12" xml:space="preserve">0.500000</text><g fill="#000"><rect x="380" y="460" width="1" height="1"/><rect x="380" y="462" width="1" height="1"/><rect x="380" y="464" width="1" height="1"/><rect x="380" y="466" width="1" height="1"/><rect x="380" y="468" width="1" height="1"/><rect x="380" y="470" width="1" height="1"/><rect x="379" y="459" width="1" height="1"/><rect x="381" y="459" width="1" height="1"/><rect x="379" y="471" width="1" height="1"/><rect x="381" y="471" width="1" height="1"/></g><text x="533" y="470" font-family="Liberation Mono" font-size="13.5" textLength="42" lengthAdjust="spacingAndGlyphs" fill="#000" stroke="#000" stroke-width="0.12" xml:space="preserve">30.0000</text><g fill="#000"><rect x="532" y="460" width="1" height="1"/><rect x="532" y="462" width="1" height="1"/><rect x="532" y="464" width="1" height="1"/><rect x="532" y="466" width="1" height="1"/><rect x="532" y="468" width="1" height="1"/><rect x="532" y="470" width="1" height="1"/><rect x="531" y="459" width="1" height="1"/><rect x="533" y="459" width="1" height="1"/><rect x="531" y="471" width="1" height="1"/><rect x="533" y="471" width="1" height="1"/></g><text x="685" y="504" font-family="Liberation Mono" font-size="13.5" textLength="66" lengthAdjust="spacingAndGlyphs" fill="#000" stroke="#000" stroke-width="0.12" xml:space="preserve">1.00000e-18</text><g fill="#000"><rect x="684" y="494" width="1" height="1"/><rect x="684" y="496" width="1" height="1"/><rect x="684" y="498" width="1" height="1"/><rect x="684" y="500" width="1" height="1"/><rect x="684" y="502" width="1" height="1"/><rect x="684" y="504" width="1" height="1"/><rect x="683" y="493" width="1" height="1"/><rect x="685" y="493" width="1" height="1"/><rect x="683" y="505" width="1" height="1"/><rect x="685" y="505" width="1" height="1"/></g><g shape-rendering="crispEdges"><rect x="343" y="534" width="557" height="1" fill="#3d5585"/><rect x="343" y="534" width="1" height="169" fill="#3d5585"/><rect x="344" y="535" width="555" height="1" fill="#c2d6fd"/><rect x="344" y="535" width="1" height="167" fill="#c2d6fd"/><rect x="344" y="702" width="556" height="1" fill="#3d5585"/><rect x="899" y="535" width="1" height="168" fill="#3d5585"/><rect x="343" y="703" width="558" height="1" fill="#c2d6fd"/><rect x="900" y="534" width="1" height="170" fill="#c2d6fd"/><rect x="351" y="568" width="148" height="1" fill="#3d5585"/><rect x="351" y="568" width="1" height="127" fill="#3d5585"/><rect x="352" y="569" width="146" height="1" fill="#c2d6fd"/><rect x="352" y="569" width="1" height="125" fill="#c2d6fd"/><rect x="352" y="694" width="147" height="1" fill="#3d5585"/><rect x="498" y="569" width="1" height="126" fill="#3d5585"/><rect x="351" y="695" width="149" height="1" fill="#c2d6fd"/><rect x="499" y="568" width="1" height="128" fill="#c2d6fd"/><rect x="503" y="568" width="148" height="1" fill="#3d5585"/><rect x="503" y="568" width="1" height="127" fill="#3d5585"/><rect x="504" y="569" width="146" height="1" fill="#c2d6fd"/><rect x="504" y="569" width="1" height="125" fill="#c2d6fd"/><rect x="504" y="694" width="147" height="1" fill="#3d5585"/><rect x="650" y="569" width="1" height="126" fill="#3d5585"/><rect x="503" y="695" width="149" height="1" fill="#c2d6fd"/><rect x="651" y="568" width="1" height="128" fill="#c2d6fd"/><rect x="655" y="568" width="190" height="1" fill="#3d5585"/><rect x="655" y="568" width="1" height="127" fill="#3d5585"/><rect x="656" y="569" width="188" height="1" fill="#c2d6fd"/><rect x="656" y="569" width="1" height="125" fill="#c2d6fd"/><rect x="656" y="694" width="189" height="1" fill="#3d5585"/><rect x="844" y="569" width="1" height="126" fill="#3d5585"/><rect x="655" y="695" width="191" height="1" fill="#c2d6fd"/><rect x="845" y="568" width="1" height="128" fill="#c2d6fd"/><rect x="358" y="595" width="135" height="1" fill="#c2d6fd"/><rect x="358" y="595" width="1" height="21" fill="#c2d6fd"/><rect x="358" y="596" width="134" height="1" fill="#c2d6fd"/><rect x="359" y="595" width="1" height="20" fill="#c2d6fd"/><rect x="359" y="615" width="134" height="1" fill="#3d5585"/><rect x="492" y="596" width="1" height="20" fill="#3d5585"/><rect x="360" y="614" width="133" height="1" fill="#3d5585"/><rect x="491" y="597" width="1" height="19" fill="#3d5585"/><rect x="510" y="595" width="135" height="1" fill="#c2d6fd"/><rect x="510" y="595" width="1" height="21" fill="#c2d6fd"/><rect x="510" y="596" width="134" height="1" fill="#c2d6fd"/><rect x="511" y="595" width="1" height="20" fill="#c2d6fd"/><rect x="511" y="615" width="134" height="1" fill="#3d5585"/><rect x="644" y="596" width="1" height="20" fill="#3d5585"/><rect x="512" y="614" width="133" height="1" fill="#3d5585"/><rect x="643" y="597" width="1" height="19" fill="#3d5585"/><rect x="662" y="629" width="177" height="1" fill="#c2d6fd"/><rect x="662" y="629" width="1" height="21" fill="#c2d6fd"/><rect x="662" y="630" width="176" height="1" fill="#c2d6fd"/><rect x="663" y="629" width="1" height="20" fill="#c2d6fd"/><rect x="663" y="649" width="176" height="1" fill="#3d5585"/><rect x="838" y="630" width="1" height="20" fill="#3d5585"/><rect x="664" y="648" width="175" height="1" fill="#3d5585"/><rect x="837" y="631" width="1" height="19" fill="#3d5585"/><rect x="374" y="626" width="116" height="1" fill="#3d5585"/><rect x="374" y="626" width="1" height="27" fill="#3d5585"/><rect x="374" y="627" width="115" height="1" fill="#3d5585"/><rect x="375" y="626" width="1" height="26" fill="#3d5585"/><rect x="375" y="652" width="115" height="1" fill="#c2d6fd"/><rect x="489" y="627" width="1" height="26" fill="#c2d6fd"/><rect x="376" y="651" width="114" height="1" fill="#c2d6fd"/><rect x="488" y="628" width="1" height="25" fill="#c2d6fd"/><rect x="526" y="626" width="116" height="1" fill="#3d5585"/><rect x="526" y="626" width="1" height="27" fill="#3d5585"/><rect x="526" y="627" width="115" height="1" fill="#3d5585"/><rect x="527" y="626" width="1" height="26" fill="#3d5585"/><rect x="527" y="652" width="115" height="1" fill="#c2d6fd"/><rect x="641" y="627" width="1" height="26" fill="#c2d6fd"/><rect x="528" y="651" width="114" height="1" fill="#c2d6fd"/><rect x="640" y="628" width="1" height="25" fill="#c2d6fd"/><rect x="678" y="660" width="116" height="1" fill="#3d5585"/><rect x="678" y="660" width="1" height="27" fill="#3d5585"/><rect x="678" y="661" width="115" height="1" fill="#3d5585"/><rect x="679" y="660" width="1" height="26" fill="#3d5585"/><rect x="679" y="686" width="115" height="1" fill="#c2d6fd"/><rect x="793" y="661" width="1" height="26" fill="#c2d6fd"/><rect x="680" y="685" width="114" height="1" fill="#c2d6fd"/><rect x="792" y="662" width="1" height="25" fill="#c2d6fd"/><g shape-rendering="crispEdges"><path d="M667.0 586.5L673.5 580.0L680.0 586.5Z" fill="#3d5585"/><path d="M667.0 586.5L673.5 593.0L680.0 586.5Z" fill="#c2d6fd"/><path d="M670.0 586.5L673.5 583.0L677.0 586.5L673.5 590.0Z" fill="#6288d5"/></g><g shape-rendering="crispEdges"><path d="M667.0 610.5L673.5 604.0L680.0 610.5Z" fill="#c2d6fd"/><path d="M667.0 610.5L673.5 617.0L680.0 610.5Z" fill="#3d5585"/><path d="M670.0 610.5L673.5 607.0L677.0 610.5L673.5 614.0Z" fill="#73a0fa"/></g></g><text x="352" y="555" font-family="Liberation Mono" font-size="13.5" textLength="72" lengthAdjust="spacingAndGlyphs" fill="#000" stroke="#000" stroke-width="0.12" xml:space="preserve">COMPONENT  2</text><text x="391" y="586" font-family="Liberation Mono" font-size="13.5" textLength="66" lengthAdjust="spacingAndGlyphs" fill="url(#st)" stroke="url(#st)" stroke-width="0.15" xml:space="preserve">Line Center</text><text x="545" y="586" font-family="Liberation Mono" font-size="13.5" textLength="60" lengthAdjust="spacingAndGlyphs" fill="url(#st)" stroke="url(#st)" stroke-width="0.15" xml:space="preserve">Line Width</text><text x="394" y="611" font-family="Liberation Mono" font-size="13.5" textLength="60" lengthAdjust="spacingAndGlyphs" fill="url(#st)" stroke="url(#st)" stroke-width="0.15" xml:space="preserve">cursor ...</text><text x="545" y="611" font-family="Liberation Mono" font-size="13.5" textLength="60" lengthAdjust="spacingAndGlyphs" fill="url(#st)" stroke="url(#st)" stroke-width="0.15" xml:space="preserve">cursor ...</text><text x="683" y="591" font-family="Liberation Mono" font-size="13.5" textLength="126" lengthAdjust="spacingAndGlyphs" fill="url(#st)" stroke="url(#st)" stroke-width="0.15" xml:space="preserve">Line Height(Emission)</text><text x="683" y="615" font-family="Liberation Mono" font-size="13.5" textLength="150" lengthAdjust="spacingAndGlyphs" fill="url(#st)" stroke="url(#st)" stroke-width="0.15" xml:space="preserve">Optical Depth(Absorption)</text><text x="718" y="645" font-family="Liberation Mono" font-size="13.5" textLength="60" lengthAdjust="spacingAndGlyphs" fill="url(#st)" stroke="url(#st)" stroke-width="0.15" xml:space="preserve">cursor ...</text><text x="381" y="644" font-family="Liberation Mono" font-size="13.5" textLength="48" lengthAdjust="spacingAndGlyphs" fill="url(#st)" stroke="url(#st)" stroke-width="0.15" xml:space="preserve">0.500000</text><g fill="#000"><rect x="380" y="634" width="1" height="1"/><rect x="380" y="636" width="1" height="1"/><rect x="380" y="638" width="1" height="1"/><rect x="380" y="640" width="1" height="1"/><rect x="380" y="642" width="1" height="1"/><rect x="380" y="644" width="1" height="1"/><rect x="379" y="633" width="1" height="1"/><rect x="381" y="633" width="1" height="1"/><rect x="379" y="645" width="1" height="1"/><rect x="381" y="645" width="1" height="1"/></g><text x="533" y="644" font-family="Liberation Mono" font-size="13.5" textLength="42" lengthAdjust="spacingAndGlyphs" fill="url(#st)" stroke="url(#st)" stroke-width="0.15" xml:space="preserve">30.0000</text><g fill="#000"><rect x="532" y="634" width="1" height="1"/><rect x="532" y="636" width="1" height="1"/><rect x="532" y="638" width="1" height="1"/><rect x="532" y="640" width="1" height="1"/><rect x="532" y="642" width="1" height="1"/><rect x="532" y="644" width="1" height="1"/><rect x="531" y="633" width="1" height="1"/><rect x="533" y="633" width="1" height="1"/><rect x="531" y="645" width="1" height="1"/><rect x="533" y="645" width="1" height="1"/></g><text x="685" y="678" font-family="Liberation Mono" font-size="13.5" textLength="66" lengthAdjust="spacingAndGlyphs" fill="url(#st)" stroke="url(#st)" stroke-width="0.15" xml:space="preserve">1.00000e-18</text><g fill="#000"><rect x="684" y="668" width="1" height="1"/><rect x="684" y="670" width="1" height="1"/><rect x="684" y="672" width="1" height="1"/><rect x="684" y="674" width="1" height="1"/><rect x="684" y="676" width="1" height="1"/><rect x="684" y="678" width="1" height="1"/><rect x="683" y="667" width="1" height="1"/><rect x="685" y="667" width="1" height="1"/><rect x="683" y="679" width="1" height="1"/><rect x="685" y="679" width="1" height="1"/></g><g shape-rendering="crispEdges"><rect x="343" y="708" width="557" height="1" fill="#3d5585"/><rect x="343" y="708" width="1" height="169" fill="#3d5585"/><rect x="344" y="709" width="555" height="1" fill="#c2d6fd"/><rect x="344" y="709" width="1" height="167" fill="#c2d6fd"/><rect x="344" y="876" width="556" height="1" fill="#3d5585"/><rect x="899" y="709" width="1" height="168" fill="#3d5585"/><rect x="343" y="877" width="558" height="1" fill="#c2d6fd"/><rect x="900" y="708" width="1" height="170" fill="#c2d6fd"/><rect x="351" y="742" width="148" height="1" fill="#3d5585"/><rect x="351" y="742" width="1" height="127" fill="#3d5585"/><rect x="352" y="743" width="146" height="1" fill="#c2d6fd"/><rect x="352" y="743" width="1" height="125" fill="#c2d6fd"/><rect x="352" y="868" width="147" height="1" fill="#3d5585"/><rect x="498" y="743" width="1" height="126" fill="#3d5585"/><rect x="351" y="869" width="149" height="1" fill="#c2d6fd"/><rect x="499" y="742" width="1" height="128" fill="#c2d6fd"/><rect x="503" y="742" width="148" height="1" fill="#3d5585"/><rect x="503" y="742" width="1" height="127" fill="#3d5585"/><rect x="504" y="743" width="146" height="1" fill="#c2d6fd"/><rect x="504" y="743" width="1" height="125" fill="#c2d6fd"/><rect x="504" y="868" width="147" height="1" fill="#3d5585"/><rect x="650" y="743" width="1" height="126" fill="#3d5585"/><rect x="503" y="869" width="149" height="1" fill="#c2d6fd"/><rect x="651" y="742" width="1" height="128" fill="#c2d6fd"/><rect x="655" y="742" width="190" height="1" fill="#3d5585"/><rect x="655" y="742" width="1" height="127" fill="#3d5585"/><rect x="656" y="743" width="188" height="1" fill="#c2d6fd"/><rect x="656" y="743" width="1" height="125" fill="#c2d6fd"/><rect x="656" y="868" width="189" height="1" fill="#3d5585"/><rect x="844" y="743" width="1" height="126" fill="#3d5585"/><rect x="655" y="869" width="191" height="1" fill="#c2d6fd"/><rect x="845" y="742" width="1" height="128" fill="#c2d6fd"/><rect x="358" y="769" width="135" height="1" fill="#c2d6fd"/><rect x="358" y="769" width="1" height="21" fill="#c2d6fd"/><rect x="358" y="770" width="134" height="1" fill="#c2d6fd"/><rect x="359" y="769" width="1" height="20" fill="#c2d6fd"/><rect x="359" y="789" width="134" height="1" fill="#3d5585"/><rect x="492" y="770" width="1" height="20" fill="#3d5585"/><rect x="360" y="788" width="133" height="1" fill="#3d5585"/><rect x="491" y="771" width="1" height="19" fill="#3d5585"/><rect x="510" y="769" width="135" height="1" fill="#c2d6fd"/><rect x="510" y="769" width="1" height="21" fill="#c2d6fd"/><rect x="510" y="770" width="134" height="1" fill="#c2d6fd"/><rect x="511" y="769" width="1" height="20" fill="#c2d6fd"/><rect x="511" y="789" width="134" height="1" fill="#3d5585"/><rect x="644" y="770" width="1" height="20" fill="#3d5585"/><rect x="512" y="788" width="133" height="1" fill="#3d5585"/><rect x="643" y="771" width="1" height="19" fill="#3d5585"/><rect x="662" y="803" width="177" height="1" fill="#c2d6fd"/><rect x="662" y="803" width="1" height="21" fill="#c2d6fd"/><rect x="662" y="804" width="176" height="1" fill="#c2d6fd"/><rect x="663" y="803" width="1" height="20" fill="#c2d6fd"/><rect x="663" y="823" width="176" height="1" fill="#3d5585"/><rect x="838" y="804" width="1" height="20" fill="#3d5585"/><rect x="664" y="822" width="175" height="1" fill="#3d5585"/><rect x="837" y="805" width="1" height="19" fill="#3d5585"/><rect x="374" y="800" width="116" height="1" fill="#3d5585"/><rect x="374" y="800" width="1" height="27" fill="#3d5585"/><rect x="374" y="801" width="115" height="1" fill="#3d5585"/><rect x="375" y="800" width="1" height="26" fill="#3d5585"/><rect x="375" y="826" width="115" height="1" fill="#c2d6fd"/><rect x="489" y="801" width="1" height="26" fill="#c2d6fd"/><rect x="376" y="825" width="114" height="1" fill="#c2d6fd"/><rect x="488" y="802" width="1" height="25" fill="#c2d6fd"/><rect x="526" y="800" width="116" height="1" fill="#3d5585"/><rect x="526" y="800" width="1" height="27" fill="#3d5585"/><rect x="526" y="801" width="115" height="1" fill="#3d5585"/><rect x="527" y="800" width="1" height="26" fill="#3d5585"/><rect x="527" y="826" width="115" height="1" fill="#c2d6fd"/><rect x="641" y="801" width="1" height="26" fill="#c2d6fd"/><rect x="528" y="825" width="114" height="1" fill="#c2d6fd"/><rect x="640" y="802" width="1" height="25" fill="#c2d6fd"/><rect x="678" y="834" width="116" height="1" fill="#3d5585"/><rect x="678" y="834" width="1" height="27" fill="#3d5585"/><rect x="678" y="835" width="115" height="1" fill="#3d5585"/><rect x="679" y="834" width="1" height="26" fill="#3d5585"/><rect x="679" y="860" width="115" height="1" fill="#c2d6fd"/><rect x="793" y="835" width="1" height="26" fill="#c2d6fd"/><rect x="680" y="859" width="114" height="1" fill="#c2d6fd"/><rect x="792" y="836" width="1" height="25" fill="#c2d6fd"/><g shape-rendering="crispEdges"><path d="M667.0 760.5L673.5 754.0L680.0 760.5Z" fill="#3d5585"/><path d="M667.0 760.5L673.5 767.0L680.0 760.5Z" fill="#c2d6fd"/><path d="M670.0 760.5L673.5 757.0L677.0 760.5L673.5 764.0Z" fill="#6288d5"/></g><g shape-rendering="crispEdges"><path d="M667.0 784.5L673.5 778.0L680.0 784.5Z" fill="#c2d6fd"/><path d="M667.0 784.5L673.5 791.0L680.0 784.5Z" fill="#3d5585"/><path d="M670.0 784.5L673.5 781.0L677.0 784.5L673.5 788.0Z" fill="#73a0fa"/></g></g><text x="352" y="729" font-family="Liberation Mono" font-size="13.5" textLength="72" lengthAdjust="spacingAndGlyphs" fill="#000" stroke="#000" stroke-width="0.12" xml:space="preserve">COMPONENT  3</text><text x="391" y="760" font-family="Liberation Mono" font-size="13.5" textLength="66" lengthAdjust="spacingAndGlyphs" fill="url(#st)" stroke="url(#st)" stroke-width="0.15" xml:space="preserve">Line Center</text><text x="545" y="760" font-family="Liberation Mono" font-size="13.5" textLength="60" lengthAdjust="spacingAndGlyphs" fill="url(#st)" stroke="url(#st)" stroke-width="0.15" xml:space="preserve">Line Width</text><text x="394" y="785" font-family="Liberation Mono" font-size="13.5" textLength="60" lengthAdjust="spacingAndGlyphs" fill="url(#st)" stroke="url(#st)" stroke-width="0.15" xml:space="preserve">cursor ...</text><text x="545" y="785" font-family="Liberation Mono" font-size="13.5" textLength="60" lengthAdjust="spacingAndGlyphs" fill="url(#st)" stroke="url(#st)" stroke-width="0.15" xml:space="preserve">cursor ...</text><text x="683" y="765" font-family="Liberation Mono" font-size="13.5" textLength="126" lengthAdjust="spacingAndGlyphs" fill="url(#st)" stroke="url(#st)" stroke-width="0.15" xml:space="preserve">Line Height(Emission)</text><text x="683" y="789" font-family="Liberation Mono" font-size="13.5" textLength="150" lengthAdjust="spacingAndGlyphs" fill="url(#st)" stroke="url(#st)" stroke-width="0.15" xml:space="preserve">Optical Depth(Absorption)</text><text x="718" y="819" font-family="Liberation Mono" font-size="13.5" textLength="60" lengthAdjust="spacingAndGlyphs" fill="url(#st)" stroke="url(#st)" stroke-width="0.15" xml:space="preserve">cursor ...</text><text x="381" y="818" font-family="Liberation Mono" font-size="13.5" textLength="48" lengthAdjust="spacingAndGlyphs" fill="url(#st)" stroke="url(#st)" stroke-width="0.15" xml:space="preserve">0.500000</text><g fill="#000"><rect x="380" y="808" width="1" height="1"/><rect x="380" y="810" width="1" height="1"/><rect x="380" y="812" width="1" height="1"/><rect x="380" y="814" width="1" height="1"/><rect x="380" y="816" width="1" height="1"/><rect x="380" y="818" width="1" height="1"/><rect x="379" y="807" width="1" height="1"/><rect x="381" y="807" width="1" height="1"/><rect x="379" y="819" width="1" height="1"/><rect x="381" y="819" width="1" height="1"/></g><text x="533" y="818" font-family="Liberation Mono" font-size="13.5" textLength="42" lengthAdjust="spacingAndGlyphs" fill="url(#st)" stroke="url(#st)" stroke-width="0.15" xml:space="preserve">30.0000</text><g fill="#000"><rect x="532" y="808" width="1" height="1"/><rect x="532" y="810" width="1" height="1"/><rect x="532" y="812" width="1" height="1"/><rect x="532" y="814" width="1" height="1"/><rect x="532" y="816" width="1" height="1"/><rect x="532" y="818" width="1" height="1"/><rect x="531" y="807" width="1" height="1"/><rect x="533" y="807" width="1" height="1"/><rect x="531" y="819" width="1" height="1"/><rect x="533" y="819" width="1" height="1"/></g><text x="685" y="852" font-family="Liberation Mono" font-size="13.5" textLength="66" lengthAdjust="spacingAndGlyphs" fill="url(#st)" stroke="url(#st)" stroke-width="0.15" xml:space="preserve">1.00000e-18</text><g fill="#000"><rect x="684" y="842" width="1" height="1"/><rect x="684" y="844" width="1" height="1"/><rect x="684" y="846" width="1" height="1"/><rect x="684" y="848" width="1" height="1"/><rect x="684" y="850" width="1" height="1"/><rect x="684" y="852" width="1" height="1"/><rect x="683" y="841" width="1" height="1"/><rect x="685" y="841" width="1" height="1"/><rect x="683" y="853" width="1" height="1"/><rect x="685" y="853" width="1" height="1"/></g></g></svg><g shape-rendering="crispEdges"><rect x="338" y="247" width="484" height="2" fill="#3d5585"/><rect x="338" y="247" width="2" height="504" fill="#3d5585"/><rect x="340" y="749" width="482" height="2" fill="#c2d6fd"/><rect x="820" y="249" width="2" height="502" fill="#c2d6fd"/><rect x="832" y="249" width="11" height="500" fill="#6288d5"/><rect x="830" y="247" width="15" height="1" fill="#3d5585"/><rect x="830" y="247" width="1" height="504" fill="#3d5585"/><rect x="830" y="248" width="14" height="1" fill="#3d5585"/><rect x="831" y="247" width="1" height="503" fill="#3d5585"/><rect x="831" y="750" width="14" height="1" fill="#c2d6fd"/><rect x="844" y="248" width="1" height="503" fill="#c2d6fd"/><rect x="832" y="749" width="13" height="1" fill="#c2d6fd"/><rect x="843" y="249" width="1" height="502" fill="#c2d6fd"/><rect x="832" y="261" width="11" height="129" fill="#73a0fa"/><rect x="832" y="261" width="11" height="1" fill="#c2d6fd"/><rect x="832" y="261" width="1" height="129" fill="#c2d6fd"/><rect x="832" y="262" width="10" height="1" fill="#c2d6fd"/><rect x="833" y="261" width="1" height="128" fill="#c2d6fd"/><rect x="833" y="389" width="10" height="1" fill="#3d5585"/><rect x="842" y="262" width="1" height="128" fill="#3d5585"/><rect x="834" y="388" width="9" height="1" fill="#3d5585"/><rect x="841" y="263" width="1" height="127" fill="#3d5585"/><rect x="340" y="761" width="480" height="11" fill="#6288d5"/><rect x="338" y="759" width="484" height="1" fill="#3d5585"/><rect x="338" y="759" width="1" height="15" fill="#3d5585"/><rect x="338" y="760" width="483" height="1" fill="#3d5585"/><rect x="339" y="759" width="1" height="14" fill="#3d5585"/><rect x="339" y="773" width="483" height="1" fill="#c2d6fd"/><rect x="821" y="760" width="1" height="14" fill="#c2d6fd"/><rect x="340" y="772" width="482" height="1" fill="#c2d6fd"/><rect x="820" y="761" width="1" height="13" fill="#c2d6fd"/><rect x="352" y="761" width="426" height="11" fill="#73a0fa"/><rect x="352" y="761" width="426" height="1" fill="#c2d6fd"/><rect x="352" y="761" width="1" height="11" fill="#c2d6fd"/><rect x="352" y="762" width="425" height="1" fill="#c2d6fd"/><rect x="353" y="761" width="1" height="10" fill="#c2d6fd"/><rect x="353" y="771" width="425" height="1" fill="#3d5585"/><rect x="777" y="762" width="1" height="10" fill="#3d5585"/><rect x="354" y="770" width="424" height="1" fill="#3d5585"/><rect x="776" y="763" width="1" height="9" fill="#3d5585"/></g><clipPath id="ar1"><polygon points="832,260 837.5,249 843,260"/></clipPath><g clip-path="url(#ar1)"><polygon points="832,260 837.5,249 843,260" fill="#3d5585"/><path d="M832 260L837.5 249" stroke="#c2d6fd" stroke-width="4.2"/><polygon points="835.02,257.98 837.50,253.03 839.98,257.98" fill="#73a0fa"/></g><clipPath id="ar2"><polygon points="832,738 843,738 837.5,749"/></clipPath><g clip-path="url(#ar2)"><polygon points="832,738 843,738 837.5,749" fill="#3d5585"/><path d="M832 738L843 738" stroke="#c2d6fd" stroke-width="4.2"/><path d="M837.5 749L832 738" stroke="#c2d6fd" stroke-width="4.2"/><polygon points="835.02,740.02 839.98,740.02 837.50,744.97" fill="#73a0fa"/></g><clipPath id="ar3"><polygon points="340,766.5 351,761 351,772"/></clipPath><g clip-path="url(#ar3)"><polygon points="340,766.5 351,761 351,772" fill="#3d5585"/><path d="M340 766.5L351 761" stroke="#c2d6fd" stroke-width="4.2"/><polygon points="344.03,766.50 348.98,764.02 348.98,768.98" fill="#73a0fa"/></g><clipPath id="ar4"><polygon points="809,761 820,766.5 809,772"/></clipPath><g clip-path="url(#ar4)"><polygon points="809,761 820,766.5 809,772" fill="#3d5585"/><path d="M809 761L820 766.5" stroke="#c2d6fd" stroke-width="4.2"/><path d="M809 772L809 761" stroke="#c2d6fd" stroke-width="4.2"/><polygon points="811.02,764.02 815.97,766.50 811.02,768.98" fill="#73a0fa"/></g><path d="M18.8 32V43.5L21.3 41L23.4 46.3L26.2 45.3L24 40.4H27.5Z" fill="#000" stroke="#fff" stroke-width="1"/>
</svg></body></html>
